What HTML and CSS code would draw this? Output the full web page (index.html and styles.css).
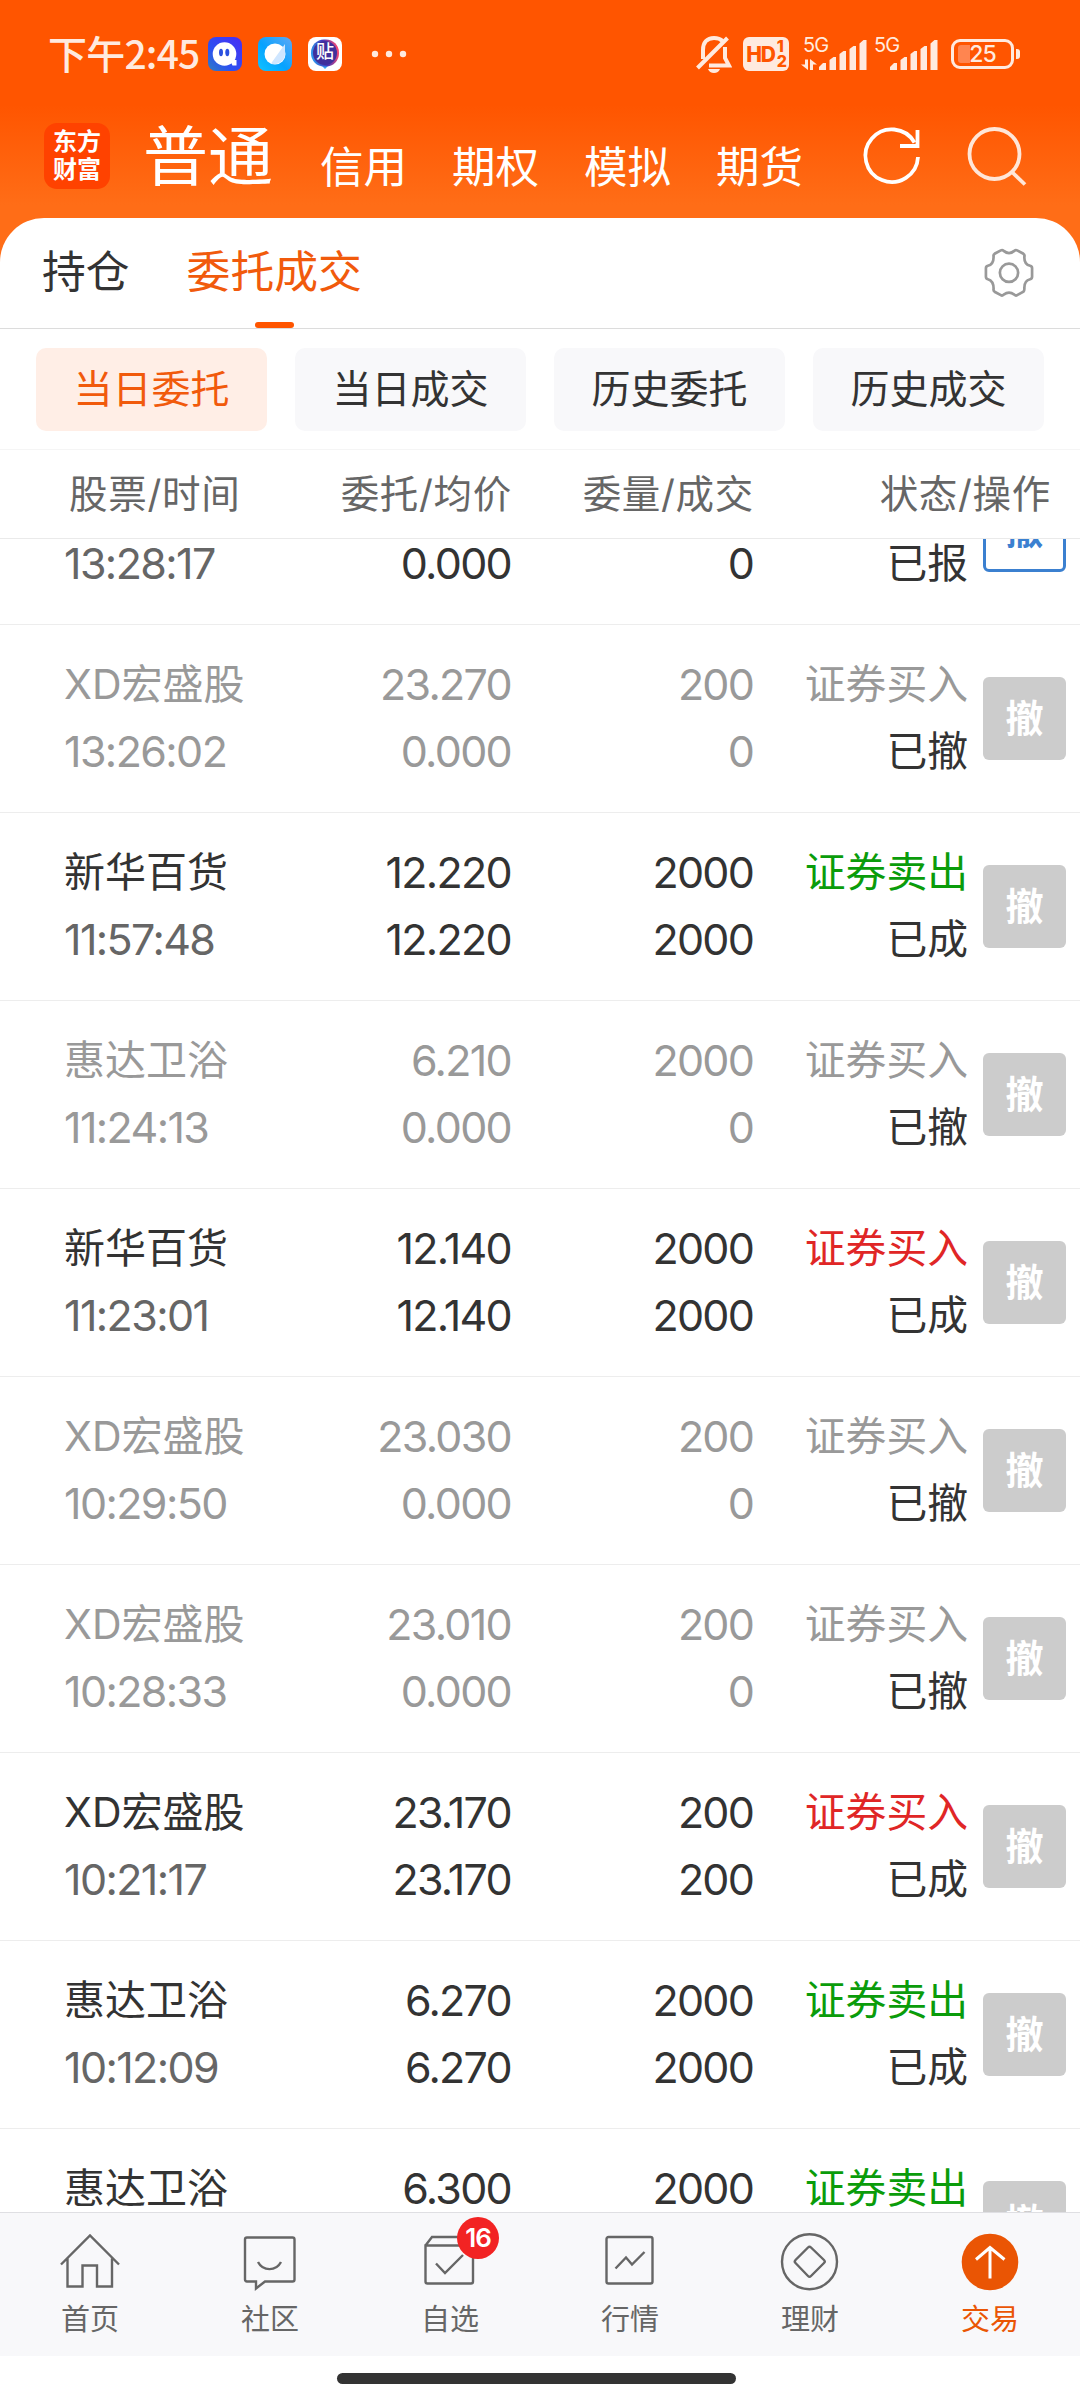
FILE: index.html
```html
<!doctype html>
<html lang="zh-CN">

<head>
<meta charset="utf-8">
<title>委托成交</title>

<link rel="stylesheet" href="styles.css">

</head>

<body>

<div id="container">

  <div class="top">
    <!-- Phone status bar -->
    <div class="status-bar">
      <span class="time">下午2:45</span>
      <div class="app-icons">
        <svg width="34" height="34" viewBox="0 0 34 34">
          <defs>
            <linearGradient id="q-bg" x1="0" y1="1" x2="1" y2="0">
              <stop offset="0" stop-color="#2f7fc0" />
              <stop offset="0.35" stop-color="#2b52f0" />
              <stop offset="1" stop-color="#4a2cf5" />
            </linearGradient>
          </defs>
          <rect width="34" height="34" rx="8" fill="url(#q-bg)" />
          <circle cx="16.500" cy="17" r="11.800" fill="#fff" />
          <path d="M22 23h6.500v5.500h-4z" fill="#fff" />
          <ellipse cx="13" cy="15.500" rx="2" ry="3.700" fill="#2b50e0" />
          <ellipse cx="19.300" cy="15.500" rx="2" ry="3.700" fill="#2b50e0" />
        </svg>
        <svg width="34" height="34" viewBox="0 0 34 34">
          <defs>
            <linearGradient id="b-bg" x1="0" y1="1" x2="1" y2="0">
              <stop offset="0" stop-color="#10c4ff" />
              <stop offset="0.45" stop-color="#06a2ff" />
              <stop offset="1" stop-color="#5fa8f5" />
            </linearGradient>
          </defs>
          <rect width="34" height="34" rx="8" fill="url(#b-bg)" />
          <circle cx="17" cy="17" r="10.500" fill="#fff" />
          <path d="M27 7v9A10.500 10.500 0 0 1 13 26.500z" fill="#cfe6ff" />
        </svg>
        <span class="tieba">
          <svg width="34" height="34" viewBox="0 0 34 34">
            <defs>
              <linearGradient id="t-ring" x1="0" y1="0.6" x2="1" y2="0.4">
                <stop offset="0" stop-color="#2d9bf0" />
                <stop offset="0.5" stop-color="#4636b8" />
                <stop offset="1" stop-color="#ff4a6e" />
              </linearGradient>
            </defs>
            <rect width="34" height="34" rx="8" fill="#fff" />
            <path d="M13 28l4 4 4-4z" fill="#35a5f5" />
            <rect x="3" y="2.500" width="28" height="27" rx="13" fill="url(#t-ring)" />
            <circle cx="17" cy="16" r="12" fill="#40309c" />
          </svg>
          <b>贴</b>
        </span>
      </div>
      <svg class="more" width="36" height="8" viewBox="0 0 36 8">
        <circle cx="4" cy="4" r="3.200" /><circle cx="18" cy="4" r="3.200" /><circle cx="32" cy="4" r="3.200" />
      </svg>

      <div class="indicators">
        <svg class="mute" width="36" height="38" viewBox="0 0 36 38">
          <path d="M7 24V15C7 7.500 11 3 18 3c4 0 6.500 1 8.500 3M29 12v11l4 7.500H13" />
          <path d="M1.500 33L31.500 3" />
          <path class="solid" d="M12 34h12c-1 2.500-3 4-6 4s-5-1.500-6-4z" />
        </svg>
        <span class="hd">HD<span><i>1</i><i>2</i></span></span>
        <div class="signal">
          <span>5G</span>
          <svg width="66" height="34" viewBox="0 0 66 34">
            <path d="M4 22.500h3V33L0 27.500h4zM9 33V22l7 5.500h-4V33z" />
            <path d="M18 33v-3l4-4h3v7zM28.500 33V23l4-3h2.500v13zM38.500 33V17l4-3h2.500v19zM48.500 33V12l4-3h2.500v24zM58.500 33V6.500l4-3.500h3v30z" />
          </svg>
        </div>
        <div class="signal second">
          <span>5G</span>
          <svg width="66" height="34" viewBox="0 0 66 34">
            <path d="M18 33v-3l4-4h3v7zM28.500 33V23l4-3h2.500v13zM38.500 33V17l4-3h2.500v19zM48.500 33V12l4-3h2.500v24zM58.500 33V6.500l4-3.500h3v30z" />
          </svg>
        </div>
        <div class="battery"><span>25</span></div>
      </div>
    </div>

    <!-- Account types -->
    <div class="accounts">
      <div class="logo">东方<br>财富</div>
      <span class="current">普通</span>
      <span>信用</span>
      <span>期权</span>
      <span>模拟</span>
      <span>期货</span>
      <svg class="refresh" width="64" height="64" viewBox="0 0 64 64">
        <path d="M58 33A26.300 26.300 0 1 1 54.500 18.500" />
        <path d="M57.500 6v16H40" />
      </svg>
      <svg class="search" width="64" height="64" viewBox="0 0 64 64">
        <circle cx="30.500" cy="31" r="25" />
        <path d="M48 49l13 12.500" />
      </svg>
    </div>
  </div>

  <div class="panel">
    <div class="tabs">
      <span>持仓</span>
      <span class="active">委托成交</span>
      <svg class="gear" width="50" height="50" viewBox="0 0 52 52">
        <path d="M17.500 2.500Q19 1.500 20.500 3Q26 7.500 31.500 3Q33 1.500 34.500 2.500L41 6Q42.500 7 42 9Q41.500 17 48 18.500Q50 19 50 21V30Q50 32 48 32.500Q41.500 34 42 42.500Q42 44.500 41 45.500L34.500 49Q33 50 31.500 48.500Q26 44.500 20.500 48.500Q19 50 17.500 49L11 45.500Q9.500 44.500 10 42.500Q10 34 4 32.500Q2 32 2 30V21Q2 19 4 18.500Q10 17 10 9Q9.500 7 11 6Z" />
        <circle cx="26" cy="25.800" r="9.500" />
      </svg>
    </div>

    <div class="filters">
      <span class="active">当日委托</span>
      <span>当日成交</span>
      <span>历史委托</span>
      <span>历史成交</span>
    </div>

    <div class="list-head">
      <span>股票/时间</span>
      <span>委托/均价</span>
      <span>委量/成交</span>
      <span>状态/操作</span>
    </div>

    <div class="order-list">
      <div class="order">
        <div class="stock"><p class="at">13:28:17</p></div>
        <div class="price"><p>0.000</p></div>
        <div class="num"><p>0</p></div>
        <div class="state"><p>已报</p></div>
        <span class="cancel enabled">撤</span>
      </div>
      <div class="order revoked">
        <div class="stock"><p>XD宏盛股</p><p class="at">13:26:02</p></div>
        <div class="price"><p>23.270</p><p>0.000</p></div>
        <div class="num"><p>200</p><p>0</p></div>
        <div class="state"><p>证券买入</p><p>已撤</p></div>
        <span class="cancel">撤</span>
      </div>
      <div class="order">
        <div class="stock"><p>新华百货</p><p class="at">11:57:48</p></div>
        <div class="price"><p>12.220</p><p>12.220</p></div>
        <div class="num"><p>2000</p><p>2000</p></div>
        <div class="state"><p class="sell">证券卖出</p><p>已成</p></div>
        <span class="cancel">撤</span>
      </div>
      <div class="order revoked">
        <div class="stock"><p>惠达卫浴</p><p class="at">11:24:13</p></div>
        <div class="price"><p>6.210</p><p>0.000</p></div>
        <div class="num"><p>2000</p><p>0</p></div>
        <div class="state"><p>证券买入</p><p>已撤</p></div>
        <span class="cancel">撤</span>
      </div>
      <div class="order">
        <div class="stock"><p>新华百货</p><p class="at">11:23:01</p></div>
        <div class="price"><p>12.140</p><p>12.140</p></div>
        <div class="num"><p>2000</p><p>2000</p></div>
        <div class="state"><p class="buy">证券买入</p><p>已成</p></div>
        <span class="cancel">撤</span>
      </div>
      <div class="order revoked">
        <div class="stock"><p>XD宏盛股</p><p class="at">10:29:50</p></div>
        <div class="price"><p>23.030</p><p>0.000</p></div>
        <div class="num"><p>200</p><p>0</p></div>
        <div class="state"><p>证券买入</p><p>已撤</p></div>
        <span class="cancel">撤</span>
      </div>
      <div class="order revoked">
        <div class="stock"><p>XD宏盛股</p><p class="at">10:28:33</p></div>
        <div class="price"><p>23.010</p><p>0.000</p></div>
        <div class="num"><p>200</p><p>0</p></div>
        <div class="state"><p>证券买入</p><p>已撤</p></div>
        <span class="cancel">撤</span>
      </div>
      <div class="order">
        <div class="stock"><p>XD宏盛股</p><p class="at">10:21:17</p></div>
        <div class="price"><p>23.170</p><p>23.170</p></div>
        <div class="num"><p>200</p><p>200</p></div>
        <div class="state"><p class="buy">证券买入</p><p>已成</p></div>
        <span class="cancel">撤</span>
      </div>
      <div class="order">
        <div class="stock"><p>惠达卫浴</p><p class="at">10:12:09</p></div>
        <div class="price"><p>6.270</p><p>6.270</p></div>
        <div class="num"><p>2000</p><p>2000</p></div>
        <div class="state"><p class="sell">证券卖出</p><p>已成</p></div>
        <span class="cancel">撤</span>
      </div>
      <div class="order">
        <div class="stock"><p>惠达卫浴</p></div>
        <div class="price"><p>6.300</p></div>
        <div class="num"><p>2000</p></div>
        <div class="state"><p class="sell">证券卖出</p></div>
        <span class="cancel">撤</span>
      </div>
    </div>
  </div>

  <!-- Bottom navigation -->
  <div class="nav">
    <div class="nav-item">
      <svg width="60" height="60" viewBox="0 0 60 60">
        <path d="M1 32.500L30 3.500 59 32.500M7.500 26.500v28h15v-21H37v21h15v-28" />
      </svg>
      <span>首页</span>
    </div>
    <div class="nav-item">
      <svg width="60" height="60" viewBox="0 0 60 60">
        <path d="M7 5.500h45.500q2 0 2 2v40q0 2-2 2H25L16 56.500v-7H7q-2 0-2-2v-40q0-2 2-2zM18 30c5 9.500 18 9.500 23 0" />
      </svg>
      <span>社区</span>
    </div>
    <div class="nav-item">
      <svg width="60" height="60" viewBox="0 0 60 60">
        <path d="M5.500 13.500H53v36q0 2-2 2H7.500q-2 0-2-2zL12 5h35l6 8.500M16 31.500l9 9.500 18-18" />
      </svg>
      <b class="badge">16</b>
      <span>自选</span>
    </div>
    <div class="nav-item">
      <svg width="60" height="60" viewBox="0 0 60 60">
        <rect x="6.500" y="5" width="46" height="46.500" rx="2" />
        <path d="M15.500 36.500l10.500-11 6 7L44.500 20" />
      </svg>
      <span>行情</span>
    </div>
    <div class="nav-item">
      <svg width="60" height="60" viewBox="0 0 60 60">
        <circle cx="29.500" cy="29.700" r="27.500" />
        <path d="M28 15.500q1.500-1.500 3 0L44 28q1.500 1.500 0 3L31 44q-1.500 1.500-3 0L15.500 31q-1.500-1.500 0-3z" />
      </svg>
      <span>理财</span>
    </div>
    <div class="nav-item active">
      <svg width="60" height="60" viewBox="0 0 60 60">
        <circle cx="30" cy="30" r="28.300" />
        <path d="M30 46.500v-31M16 27.500l14-12 14.500 12" />
      </svg>
      <span>交易</span>
    </div>
  </div>
  <div class="home-bar"></div>

</div>

</body>

</html>
```
FILE: styles.css
```css
body {
  margin: 0;
}

#container {
  background: #fff;
  color: #333;
  display: flex;
  flex-direction: column;
  font-family: Inter, "Noto Sans CJK SC", sans-serif;
  height: 2400px;
  overflow: hidden;
  width: 1080px;
}

#container p {
  margin: 0;
}

#container svg {
  display: block;
  flex: none;
}

/* orange header */

.top {
  background: linear-gradient(#ff5500 105px, #ff6d17 205px);
  box-sizing: border-box;
  flex: none;
  height: 268px;
}

.status-bar {
  align-items: center;
  box-sizing: border-box;
  color: #ffeadf;
  display: flex;
  height: 108px;
  padding: 0 66px 0 48px;
}

.status-bar .time {
  font-family: "Noto Sans CJK SC", sans-serif;
  font-size: 39px;
  font-weight: 500;
  letter-spacing: -0.8px;
  line-height: 50px;
  margin-top: -5px;
  white-space: nowrap;
  width: 160px;
}

.app-icons {
  display: flex;
  gap: 16px;
}

.tieba {
  position: relative;
}

.tieba b {
  color: #fff;
  font-size: 18px;
  font-weight: 500;
  left: 8px;
  line-height: 20px;
  position: absolute;
  top: 5px;
}

.more {
  fill: #ffeadf;
  margin-left: 29px;
}

.indicators {
  align-items: center;
  display: flex;
  margin-left: auto;
}

.indicators svg {
  fill: #ffeadf;
}

.indicators .mute {
  fill: none;
  margin-right: 11px;
  stroke: #ffeadf;
  stroke-width: 4;
}

.indicators .mute .solid {
  fill: #ffeadf;
  stroke: none;
}

.hd {
  align-items: center;
  background: #ffeadf;
  border-radius: 6px;
  color: #ff5500;
  display: flex;
  font-size: 21px;
  font-weight: 800;
  height: 34px;
  justify-content: center;
  letter-spacing: -1.2px;
  width: 46px;
}

.hd span {
  display: flex;
  flex-direction: column;
  font-size: 16px;
  line-height: 15px;
  margin-left: 2px;
}

.hd i {
  font-style: normal;
}

.signal {
  height: 34px;
  margin-left: 12px;
  position: relative;
  width: 66px;
}

.signal.second {
  margin-left: 5px;
}

.signal span {
  font-size: 20px;
  left: 2px;
  letter-spacing: -0.8px;
  line-height: 18px;
  position: absolute;
  top: -1px;
}

.battery {
  border: 3px solid #ffeadf;
  border-radius: 9px;
  box-sizing: border-box;
  height: 30px;
  line-height: 24px;
  margin-left: 13px;
  position: relative;
  text-align: center;
  width: 63px;
}

.battery::before {
  background: #ff8550;
  border-radius: 3px 0 0 3px;
  content: "";
  height: 18px;
  left: 4px;
  position: absolute;
  top: 3px;
  width: 12px;
}

.battery::after {
  background: #ffeadf;
  border-radius: 0 3px 3px 0;
  content: "";
  height: 10px;
  position: absolute;
  right: -9px;
  top: 7px;
  width: 4px;
}

.battery span {
  font-size: 23px;
  font-weight: 500;
  letter-spacing: -1px;
  position: relative;
}

.accounts {
  color: #fff;
  display: flex;
  font-size: 43.5px;
  height: 80px;
  line-height: 80px;
  padding: 15px 0 0 44px;
}

.accounts > span {
  margin: 4px 45px 0 0;
  white-space: nowrap;
}

.accounts > .current {
  font-size: 65px;
  margin: -6px 47px 0 33px;
}

.logo {
  background: #ff4200;
  border-radius: 13px;
  box-sizing: border-box;
  flex: none;
  font-size: 24px;
  font-weight: 700;
  height: 66px;
  line-height: 28px;
  padding-top: 5px;
  text-align: center;
  width: 66px;
}

.refresh,
.search {
  fill: none;
  stroke: #fff;
  stroke-width: 3.8;
}

.refresh {
  margin-left: 12px;
  margin-top: 1px;
}

.search {
  margin-left: 40px;
  stroke: #ffe6d8;
}

/* white sheet */

.panel {
  background: #fff;
  border-radius: 44px 44px 0 0;
  display: flex;
  flex-direction: column;
  height: 1994px;
  margin-top: -50px;
  overflow: hidden;
}

.tabs {
  align-items: center;
  border-bottom: 1px solid #dcdcdc;
  display: flex;
  flex: none;
  font-size: 43.8px;
  gap: 57px;
  height: 110px;
  line-height: 106px;
  padding: 0 46px 0 42px;
}

.tabs .active {
  color: #f15a0c;
  position: relative;
}

.tabs .active::after {
  background: #ff5500;
  border-radius: 3px;
  bottom: -2px;
  content: "";
  height: 6px;
  left: 68px;
  position: absolute;
  width: 39px;
}

.gear {
  fill: none;
  margin-left: auto;
  stroke: #999;
  stroke-width: 2.8;
}

.filters {
  border-bottom: 1px solid #f5f5f5;
  display: flex;
  flex: none;
  font-size: 39px;
  gap: 28px;
  height: 101px;
  line-height: 82px;
  padding: 19px 36px 0;
  text-align: center;
}

.filters span {
  background: #f8f8fa;
  border-radius: 10px;
  height: 83px;
  width: 231px;
}

.filters .active {
  background: #ffeee6;
  color: #f15a0c;
}

.list-head {
  border-bottom: 1px solid #eaeaea;
  color: #666;
  display: grid;
  flex: none;
  font-size: 38.5px;
  grid-template-columns: 243px 200px 242px 297px;
  height: 88px;
  letter-spacing: 0.7px;
  line-height: 88px;
  padding-left: 69px;
  text-align: right;
}

.list-head span:first-child {
  text-align: left;
}

.order-list {
  flex: 1;
  overflow: hidden;
}

.order {
  border-bottom: 1px solid #ededed;
  box-sizing: border-box;
  display: grid;
  font-size: 41px;
  grid-template-columns: 248px 200px 241px 214px 83px;
  height: 188px;
  line-height: 67px;
  padding: 26px 0 0 64px;
  text-align: right;
}

.order p {
  white-space: nowrap;
}

/* the list is scrolled part way into its first order */
.order:first-child {
  margin-top: -102px;
}

.order:first-child p {
  padding-top: 67px;
}

.order .stock {
  text-align: left;
}

.order .at {
  color: #666;
  font-size: 43px;
  letter-spacing: -1.6px;
}

.order .price {
  font-size: 43px;
  letter-spacing: -1.7px;
  padding-right: 1px;
}

.order .num {
  font-size: 43px;
  letter-spacing: -1.8px;
}

.order .state {
  font-size: 40.8px;
  margin-right: -1px;
}

.order .buy {
  color: #e02626;
}

.order .sell {
  color: #0a9c0a;
}

.order.revoked .stock p,
.order.revoked .price,
.order.revoked .num,
.order.revoked .state p:first-child {
  color: #999;
}

.cancel {
  background: #ccc;
  border-radius: 6px;
  box-sizing: border-box;
  color: #fff;
  font-size: 38px;
  font-weight: 700;
  height: 83px;
  line-height: 83px;
  margin: 26px 0 0 16px;
  text-align: center;
  width: 83px;
}

.cancel.enabled {
  background: #fff;
  border: 3px solid #3b80d0;
  color: #3b80d0;
  line-height: 77px;
}

/* bottom navigation */

.nav {
  background: #f8f8fa;
  border-top: 1px solid #dfdfe3;
  box-sizing: border-box;
  display: flex;
  flex: none;
  height: 144px;
}

.nav-item {
  align-items: center;
  color: #666;
  display: flex;
  flex: 1;
  flex-direction: column;
  font-size: 29px;
  line-height: 44px;
  padding-top: 19px;
  position: relative;
}

.nav-item svg {
  fill: none;
  stroke: #666;
  stroke-width: 2.4;
}

.nav-item span {
  margin-top: 6px;
}

.nav-item.active {
  color: #ea5504;
}

.nav-item.active svg {
  stroke: #fff;
  stroke-width: 3;
}

.nav-item.active circle {
  fill: #ea5504;
  stroke: none;
}

.badge {
  background: #f22323;
  border-radius: 50%;
  color: #fff;
  font-size: 26px;
  font-weight: 600;
  height: 42px;
  left: 97px;
  letter-spacing: -1px;
  line-height: 42px;
  position: absolute;
  text-align: center;
  top: 4px;
  width: 42px;
}

.home-bar {
  background: #333;
  border-radius: 6px;
  flex: none;
  height: 11px;
  margin: 17px auto 0 337px;
  width: 399px;
}
```
